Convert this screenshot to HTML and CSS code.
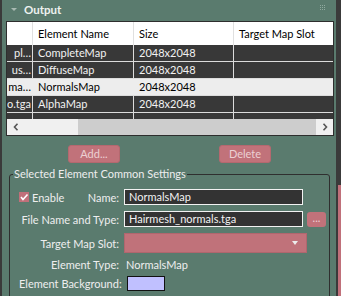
FILE: index.html
```html
<!DOCTYPE html>
<html>
<head>
<meta charset="utf-8">
<link rel="stylesheet" href="styles.css">
</head>
<body>
<div class="app">
  <div class="edge-left"></div>
  <div class="panel">
    <div class="titlebar">
      <span class="caret"></span>
      <span class="title">Output</span>
      <svg class="grip" width="5" height="5" viewBox="0 0 5 5">
        <g fill="#90a99f">
          <rect x="0" y="0" width="1" height="1"/><rect x="2" y="0" width="1" height="1"/><rect x="4" y="0" width="1" height="1"/>
          <rect x="0" y="2" width="1" height="1"/><rect x="2" y="2" width="1" height="1"/><rect x="4" y="2" width="1" height="1"/>
          <rect x="0" y="4" width="1" height="1"/><rect x="2" y="4" width="1" height="1"/><rect x="4" y="4" width="1" height="1"/>
        </g>
      </svg>
    </div>

    <div class="table">
      <div class="row thead">
        <div class="c c0"></div>
        <div class="c c1">Element Name</div>
        <div class="c c2">Size</div>
        <div class="c c3">Target Map Slot</div>
      </div>
      <div class="row dark">
        <div class="c c0">pl…</div>
        <div class="c c1">CompleteMap</div>
        <div class="c c2">2048x2048</div>
        <div class="c c3"></div>
      </div>
      <div class="row dark">
        <div class="c c0">us…</div>
        <div class="c c1">DiffuseMap</div>
        <div class="c c2">2048x2048</div>
        <div class="c c3"></div>
      </div>
      <div class="row sel">
        <div class="c c0">ma…</div>
        <div class="c c1">NormalsMap</div>
        <div class="c c2">2048x2048</div>
        <div class="c c3"></div>
      </div>
      <div class="row dark">
        <div class="c c0">o.tga</div>
        <div class="c c1">AlphaMap</div>
        <div class="c c2">2048x2048</div>
        <div class="c c3"></div>
      </div>
      <div class="row dark partial">
        <div class="c c0"></div>
        <div class="c c1"></div>
        <div class="c c2"></div>
        <div class="c c3"></div>
      </div>
      <div class="hscroll">
        <div class="sbtn">
          <svg width="6" height="8" viewBox="0 0 6 8"><path d="M4.5 0.8 L1.5 4 L4.5 7.2" fill="none" stroke="#555" stroke-width="1.6"/></svg>
        </div>
        <div class="track"></div>
        <div class="thumb"></div>
        <div class="sbtn right">
          <svg width="6" height="8" viewBox="0 0 6 8"><path d="M1.5 0.8 L4.5 4 L1.5 7.2" fill="none" stroke="#555" stroke-width="1.6"/></svg>
        </div>
      </div>
    </div>

    <div class="buttons">
      <div class="btn">Add...</div>
      <div class="btn">Delete</div>
    </div>

    <fieldset class="group">
      <legend>Selected Element Common Settings</legend>
      <div class="frow r1">
        <div class="lab split">
          <span class="check">
            <span class="box"><svg width="10" height="10" viewBox="0 0 10 10"><path d="M2 5 L4 7.5 L8.5 2.5" fill="none" stroke="#fff" stroke-width="1.6"/></svg></span>
            <span>Enable</span>
          </span>
          <span>Name:</span>
        </div>
        <div class="input">NormalsMap</div>
      </div>
      <div class="frow r2">
        <div class="lab">File Name and Type:</div>
        <div class="input">Hairmesh_normals.tga</div>
        <div class="dots">...</div>
      </div>
      <div class="frow r3">
        <div class="lab">Target Map Slot:</div>
        <div class="select"><span class="arrow"></span></div>
      </div>
      <div class="frow r4">
        <div class="lab">Element Type:</div>
        <div class="value">NormalsMap</div>
      </div>
      <div class="frow r5">
        <div class="lab">Element Background:</div>
        <div class="swatch"></div>
      </div>
    </fieldset>
  </div>
  <div class="edge-right"><div class="vthumb"></div></div>
</div>
</body>
</html>
```

FILE: styles.css
```css
* { box-sizing: border-box; }
html, body { margin: 0; padding: 0; }
body {
  width: 341px;
  height: 296px;
  overflow: hidden;
  background: #5a7b6e;
  font-family: Lato, "Liberation Sans", sans-serif;
  font-size: 11px;
  color: #eeeeee;
}
.app { display: flex; height: 296px; overflow: hidden; }
.edge-left { width: 2px; flex: none; background: #3a3a3a; }
.panel { flex: 1; min-width: 0; display: flex; flex-direction: column; }
.panel > * { flex-shrink: 0; }
.edge-right {
  width: 5px; flex: none; background: #3a3a3a;
  display: flex; flex-direction: column;
  padding-top: 185px; padding-left: 2px;
}
.vthumb { flex: 1; background: #c0707a; }

.titlebar { height: 21px; display: flex; align-items: center; padding-left: 9px; padding-bottom: 2px; }
.caret {
  width: 0; height: 0;
  border-left: 3px solid transparent; border-right: 3px solid transparent;
  border-top: 3px solid #a9bab2;
  margin-right: 7px;
}
.title { font-weight: bold; font-size: 11.5px; line-height: 14px; color: #eef2f0; }
.grip { margin-left: auto; margin-right: 11px; margin-top: -4px; }

.table {
  margin-left: 4px; width: 328px;
  border: 1px solid #2e2e2e;
  background: #383838;
}
.row { display: flex; height: 17px; border-bottom: 1px solid #dcdcdc; }
.c {
  border-right: 1px solid #dcdcdc;
  padding-left: 5px;
  line-height: 16px;
  white-space: nowrap;
  overflow: hidden;
}
.c0 { width: 26px; padding-left: 0; padding-right: 1px; text-align: right; }
.c1 { width: 101px; }
.c2 { width: 100px; }
.c3 { width: 99px; border-right: 0; }
.thead { height: 23px; background: #ffffff; color: #000; border-bottom: 0; }
.thead .c { line-height: 23px; border-right-color: #e0e0e0; }
.dark { color: #f2f2f2; }
.sel { background: #ededed; color: #000; }
.sel .c { border-right-color: #ededed; }
.partial { height: 6px; border-bottom: 0; }

.hscroll { height: 16px; display: flex; background: #f0f0f0; }
.sbtn { width: 17px; display: flex; align-items: center; justify-content: center; }
.track { width: 54px; }
.thumb { width: 238px; background: #cdcdcd; }
.sbtn.right { width: 16px; padding-left: 2px; }

.buttons { display: flex; gap: 99px; padding-left: 66px; margin-top: 9px; }
.btn {
  width: 52px; height: 18px;
  background: #c1727a;
  border: 1px solid #b4686f;
  border-radius: 3px;
  color: #ecd0d3;
  line-height: 16px;
  text-align: center;
}

.group {
  margin: 4px 6px 0 7px;
  border: 1px solid #2f2f2f;
  border-radius: 3px;
  padding: 0 0 20px 9px;
  min-width: 0;
}
.group legend {
  padding: 0 1px;
  margin-left: -6px;
  line-height: 14px;
  color: #eeeeee;
}
.frow { display: flex; align-items: center; }
.r1 { margin-top: 8px; height: 16px; }
.r2 { margin-top: 6px; height: 16px; }
.r3 { margin-top: 6px; height: 20px; }
.r4 { margin-top: 2px; height: 18px; }
.r5 { margin-top: 2px; height: 17px; }
.lab { width: 100px; flex: none; margin-right: 5px; text-align: right; white-space: nowrap; }
.lab.split { display: flex; justify-content: space-between; align-items: center; }
.check { display: flex; align-items: center; gap: 3px; }
.box { width: 10px; height: 10px; background: #c0707a; display: flex; }
.input {
  width: 179px; height: 16px;
  background: #333333;
  border: 1px solid #f2f2f2;
  color: #f2f2f2;
  padding-left: 4px;
  line-height: 14px;
  white-space: nowrap; overflow: hidden;
}
.dots {
  width: 19px; height: 15px; margin-left: 4px;
  background: #c1727a; border-radius: 3px;
  color: #ecd0d3; text-align: center; line-height: 11px;
}
.select {
  width: 183px; height: 20px;
  background: #c0727a;
  border: 1px solid #b0666e;
  display: flex; align-items: center; justify-content: flex-end;
  padding-right: 8px;
}
.arrow {
  width: 0; height: 0;
  border-left: 3px solid transparent; border-right: 3px solid transparent;
  border-top: 4px solid #ececec;
}
.value { padding-left: 2px; }
.swatch { width: 38px; height: 15px; margin-left: 3px; background: #c0c0ff; border: 1px solid #111; }
```
